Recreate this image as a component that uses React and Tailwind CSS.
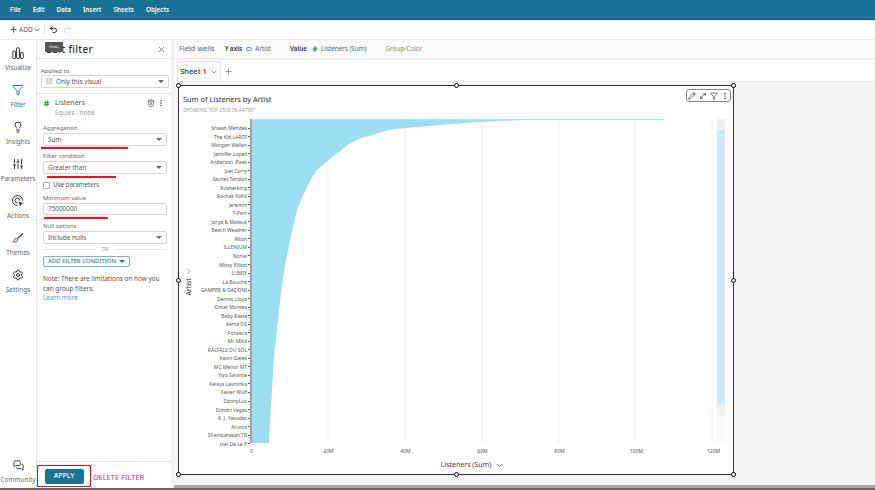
import React from "react";
import { Plus, ChevronDown, ChevronRight, Undo2, Redo2, X, Filter, Lightbulb, SlidersVertical, Settings, MessagesSquare, Trash2, MoreVertical, Hash, Pencil, MoveDiagonal, LayoutGrid } from "lucide-react";

const artists = ["Shawn Mendes","The Kid LAROI","Morgan Wallen","Jennifer Lopez","Anderson .Paak","Joel Corry","Sachet Tandon","Rusherking","Rochak Kohli","Jeremih","T-Pain","Jorge & Mateus","Beach Weather","Riton","ILLENIUM","Noriel","Missy Elliott","LUMIX","La Bouche","GAMPER & DADONI","Dennis Lloyd","Omar Montes","Baby Rasta","Kenia OS","Fonseca","Mc Mika","RÅLFÅLS DU SÖL","Kevin Gates","MC Menor MT","Yiyo Sarante","Kelsya Levronka","Xavier Wulf","DannyLux","Dimitri Vegas","K. J. Yesudas","Aruma","Silambarasan TR","Joel De La P"];

function Caret() {
  return <span className="w-0 h-0 border-l-[3px] border-r-[3px] border-t-[3px] border-l-transparent border-r-transparent border-t-[#666]" />;
}

function Select({ children, icon, className = "" }) {
  return (
    <div className={`h-[13px] border border-[#d5d5d5] rounded-[2px] flex items-center justify-between px-[4px] text-[6.4px] text-[#555] ${className}`}>
      <span className="flex items-center gap-[3px]">{icon}{children}</span>
      <Caret />
    </div>
  );
}

function Label({ children, className = "" }) {
  return <div className={`text-[5.9px] leading-[9px] text-[#666] ${className}`}>{children}</div>;
}

function Red({ className }) {
  return <div className={`absolute h-[1.5px] bg-[#f0101a] z-10 ${className}`} />;
}

function Nav({ icon, label, active }) {
  return (
    <div className="h-[37px] shrink-0 flex flex-col items-center justify-start gap-[1px] text-[#333]">
      <div className={`h-[18px] flex items-center justify-center ${active ? "text-[#1b7397]" : ""}`}>{icon}</div>
      <span className={`text-[6.4px] leading-[9px] whitespace-nowrap ${active ? "text-[#1b7397]" : "text-[#666]"}`}>{label}</span>
    </div>
  );
}

function Handle({ className }) {
  return <span className={`absolute w-[5px] h-[5px] rounded-full bg-white border border-black ${className}`} />;
}

function VisualizeIcon() {
  return (
    <svg width="12" height="12" viewBox="0 0 12 12" fill="none" stroke="#333" strokeWidth="1">
      <rect x="0.8" y="4" width="2.8" height="7.5" rx="0.6" />
      <rect x="4.6" y="0.8" width="2.8" height="10.7" rx="0.6" />
      <rect x="8.4" y="5.5" width="2.8" height="6" rx="0.6" />
    </svg>
  );
}

function ActionsIcon() {
  return (
    <svg width="12" height="12" viewBox="0 0 12 12" fill="none" stroke="#333" strokeWidth="1">
      <path d="M5.5 10.5a5 5 0 1 1 5-5" />
      <path d="M5.5 8a2.5 2.5 0 1 1 2.5-2.5" />
      <path d="M6.5 6.5 L11.5 8.3 L9.3 9.3 L8.3 11.5 Z" fill="#333" stroke="none" />
    </svg>
  );
}

function ThemesIcon() {
  return (
    <svg width="12" height="12" viewBox="0 0 12 12" fill="none" stroke="#333">
      <path d="M5.5 6.5 L11 1.5" strokeWidth="1.1" />
      <path d="M3.6 6.6 C5 6 6 7.2 5.4 8.6 C4.8 10 2.6 10.4 1 10 C2.2 9.4 2.2 7.4 3.6 6.6 Z" strokeWidth="0.9" />
    </svg>
  );
}

function Chart() {
  const w = 462, h = 324;
  const pts = [[0,0],[295,0],[261,1.5],[228,3],[188,6],[155,9],[138,11],[121,16],[108,20],[98,25],[88,33],[80,39],[72,46],[66,51],[60,60],[56,68],[50,81],[46,91],[42,108],[38,126],[35,141],[32,160],[30,174],[26,210],[23,238],[20,288],[18,324],[0,324]];
  const ticks = [77, 154, 231, 308, 384, 461];
  return (
    <svg width={w} height={h} viewBox={`0 0 ${w} ${h}`} className="block overflow-visible shrink-0">
      {ticks.map((t) => <line key={t} x1={t} x2={t} y1="0" y2={h} stroke="#f0f0f0" strokeWidth="1.2" />)}
      <polygon points={pts.map((p) => p.join(",")).join(" ")} fill="#9bddf1" />
      <line x1="0" x2="413" y1="0.5" y2="0.5" stroke="#b5e6f5" strokeWidth="1" />
      <line x1="0" x2="0" y1="0" y2={h} stroke="#888" strokeWidth="1.5" />
    </svg>
  );
}

export default function App() {
  return (
    <div className="w-[875px] h-[490px] overflow-hidden flex flex-col bg-white font-['Noto_Sans',sans-serif] relative">
      <div className="h-[20px] shrink-0 bg-[#1a7297] border-b border-[#135a78] flex items-center gap-[12px] pl-[10px] text-[6.3px] font-semibold text-white">
        <span>File</span><span>Edit</span><span>Data</span><span>Insert</span><span>Sheets</span><span>Objects</span>
      </div>

      <div className="h-[20px] shrink-0 bg-white border-b border-[#e6e6e6] flex items-center pl-[9px] text-[#444]">
        <Plus size={9} strokeWidth={2.4} />
        <span className="text-[6.5px] ml-[1px] text-[#555]">ADD</span>
        <ChevronDown size={8} className="ml-0" />
        <span className="w-px h-[14px] bg-[#e5e5e5] ml-[3px]" />
        <Undo2 size={9} strokeWidth={2.6} className="ml-[4px] text-[#222]" />
        <Redo2 size={9} className="ml-[5px] text-[#c8c8c8]" />
      </div>

      <div className="flex-1 min-h-0 flex border-b-[2px] border-[#666]">
        <aside className="w-[37px] shrink-0 border-r border-[#e6e6e6] flex flex-col pt-[4px]">
          <Nav icon={<VisualizeIcon />} label="Visualize" />
          <Nav active icon={<Filter size={12} />} label="Filter" />
          <Nav icon={<Lightbulb size={12} />} label="Insights" />
          <Nav icon={<SlidersVertical size={12} />} label="Parameters" />
          <Nav icon={<ActionsIcon />} label="Actions" />
          <Nav icon={<ThemesIcon />} label="Themes" />
          <Nav icon={<Settings size={12} />} label="Settings" />
          <div className="mt-auto h-[28px] mb-[4px]"><Nav icon={<MessagesSquare size={11} />} label="Community" /></div>
        </aside>

        <section className="w-[137px] shrink-0 border-r-[3px] border-[#f0f0f0] flex flex-col relative">
          <div className="h-[19px] shrink-0 border-b border-[#e8e8e8] flex items-center justify-between pl-[9px] pr-[5px]">
            <span className="text-[10px] tracking-[0.3px] font-medium text-[#333]">Edit filter</span>
            <X size={9} className="text-[#666]" />
          </div>
          <div className="absolute left-[8px] top-[2px] w-[18px] h-[10px] bg-[#555] rounded-[1px] text-white text-[3.5px] flex items-center justify-center">Undo</div>

          <div className="h-[35px] shrink-0 pl-[4px] pr-[2px] pt-[8px] border-b border-[#e8e8e8]">
            <Label className="h-[8px] leading-[8px]">Applied to</Label>
            <Select icon={<LayoutGrid size={7} className="text-[#aaa]" />}>Only this visual</Select>
          </div>

          <div className="pl-[6px] pr-[4px] pt-[4px] flex flex-col flex-1 min-h-0 relative">
            <div className="flex items-start">
              <Hash size={7} strokeWidth={3} className="text-[#2e8b2e] mt-[1.5px] mr-[5px]" />
              <div className="flex-1">
                <div className="text-[7px] leading-[10px] text-[#555]">Listeners</div>
                <div className="text-[6.3px] leading-[10px] text-[#999]">Equals - none</div>
              </div>
              <Trash2 size={8} className="text-[#555] mt-[1px]" />
              <MoreVertical size={8} className="text-[#444] mt-[1px] ml-[2px] mr-[2px]" />
            </div>

            <Label className="mt-[6px]">Aggregation</Label>
            <Select>Sum</Select>
            <Red className="left-[4px] top-[53px] w-[87px]" />

            <Label className="mt-[6px]">Filter condition</Label>
            <Select>Greater than</Select>
            <Red className="left-[10px] top-[82px] w-[69px]" />

            <div className="flex items-center gap-[3px] mt-[7px] text-[6.2px] leading-[8px] text-[#555]">
              <span className="w-[7px] h-[7px] border border-[#aaa] rounded-[1px]" />Use parameters
            </div>

            <Label className="mt-[5px]">Minimum value</Label>
            <div className="h-[12px] border border-[#d5d5d5] rounded-[2px] flex items-center px-[4px] text-[6.4px] text-[#555]">75000000</div>
            <Red className="left-[7px] top-[123px] w-[64px]" />

            <Label className="mt-[7px]">Null options</Label>
            <Select className="mt-0">Include nulls</Select>

            <div className="flex items-center gap-[6px] my-[2px] text-[5px] text-[#999] leading-[7px]">
              <span className="flex-1 h-px bg-[#e6e6e6]" />OR<span className="flex-1 h-px bg-[#e6e6e6]" />
            </div>

            <div className="h-[11px] w-[87px] mt-[1px] border border-[#7fb1c8] rounded-[2px] bg-[#f7fbfd] flex items-center justify-center gap-[3px] text-[6px] text-[#1b7397]">
              ADD FILTER CONDITION
              <span className="w-0 h-0 border-l-[3px] border-r-[3px] border-t-[3px] border-l-transparent border-r-transparent border-t-[#1b7397]" />
            </div>

            <p className="mt-[7px] text-[6.4px] leading-[9.5px] text-[#555]">Note: There are limitations on how you can group filters.</p>
            <span className="text-[6.4px] leading-[10px] text-[#3f9fd0]">Learn more</span>
          </div>

          <div className="h-[27px] shrink-0 border-t border-[#e8e8e8] flex items-end pb-[1px] relative">
            <div className="w-[54px] h-[22px] border-[1.5px] border-[#d8141c] flex items-center justify-center">
              <span className="w-[39px] h-[15px] rounded-[2px] bg-[#1a7297] text-white text-[7px] font-medium flex items-center justify-center">APPLY</span>
            </div>
            <span className="ml-[2px] mb-[5px] text-[7.5px] leading-[10px] text-[#c6356c]">DELETE FILTER</span>
          </div>
        </section>

        <main className="flex-1 min-w-0 flex flex-col bg-[#f4f4f4]">
          <div className="h-[20px] shrink-0 bg-[#fafafa] border-b-[2px] border-[#eeeeee] flex items-center pl-[5px] text-[6.3px] text-[#666]">
            <span className="text-[7.4px] text-[#666]">Field wells</span>
            <span className="ml-[10px] font-semibold text-[#333]">Y axis</span>
            <span className="ml-[4px] w-[6px] h-[4px] border border-[#3f9fd0] rounded-[2px]" />
            <span className="ml-[3px]">Artist</span>
            <span className="ml-[19px] font-semibold text-[#333]">Value</span>
            <Hash size={6} strokeWidth={3} className="ml-[5px] text-[#2e8b2e]" />
            <span className="ml-[3px]">Listeners (Sum)</span>
            <span className="ml-[19px] text-[#888]">Group/Color</span>
          </div>

          <div className="h-[22px] shrink-0 bg-white border-b-[1.5px] border-[#ececec] flex items-end pl-[3px]">
            <div className="h-[20px] w-[44px] bg-[#fafafa] border border-b-0 border-[#e6e6e6] flex items-center justify-center gap-[3px] text-[7.5px] font-medium text-[#333]">
              Sheet 1 <ChevronDown size={8} className="text-[#666]" />
            </div>
            <Plus size={9} className="ml-[3px] mb-[5px] text-[#777]" />
          </div>

          <div className="flex-1 min-h-0 pl-[4px] pt-[3px]">
            <div className="relative w-[556px] h-[390px] bg-white border-[1.5px] border-[#333]">
              <Handle className="-left-[3px] -top-[3px]" />
              <Handle className="left-[275px] -top-[3px]" />
              <Handle className="-right-[3px] -top-[3px]" />
              <Handle className="-left-[3px] top-[192px]" />
              <Handle className="-right-[3px] top-[192px]" />
              <Handle className="-left-[3px] -bottom-[3px]" />
              <Handle className="left-[275px] -bottom-[3px]" />
              <Handle className="-right-[3px] -bottom-[3px]" />

              <div className="absolute right-[2px] top-[3px] w-[45px] h-[13px] bg-white border border-[#888] rounded-[3px] flex items-center justify-center gap-[3px] text-[#333]">
                <Pencil size={8} /><MoveDiagonal size={8} /><Filter size={8} /><MoreVertical size={8} />
              </div>

              <div className="pl-[4px] pt-[7px]">
                <div className="text-[7.4px] leading-[12px] text-[#333]">Sum of Listeners by Artist</div>
                <div className="text-[5px] leading-[8px] mt-[1px] text-[#999]">SHOWING TOP 2500 IN ARTIST</div>
              </div>

              <div className="flex mt-[5px]">
                <div className="w-[11px] ml-[4px] flex flex-col items-center pt-[147px]">
                  <ChevronRight size={11} strokeWidth={1.2} className="text-[#555]" />
                  <span className="mt-[1px] [writing-mode:vertical-rl] rotate-180 text-[7px] leading-[10px] text-[#333]">Artist</span>
                </div>
                <div className="w-[57px] shrink-0 h-[324px] mt-[5px] flex flex-col justify-between pr-[1px] -mb-[5px]">
                  {artists.map((a) => (
                    <div key={a} className="h-[8px] flex items-center justify-end text-[5px] leading-[8px] text-[#555] whitespace-nowrap">
                      {a}<span className="w-[2px] h-px bg-[#555] ml-[1px]" />
                    </div>
                  ))}
                </div>
                <Chart />
                <div className="w-[8px] h-[324px] ml-[4px] bg-[#fafafa] flex flex-col">
                  <div className="h-[11px] bg-[#f0f0f0]" />
                  <div className="h-[274px] bg-[#d0e9f7]" />
                  <div className="h-[11px] bg-[#f0f0f0]" />
                </div>
              </div>

              <div className="flex ml-[34px] mt-[4px] text-[5px] leading-[8px] text-[#555]">
                {["0","20M","40M","60M","80M","100M","120M"].map((t) => (
                  <span key={t} className="w-[77px] shrink-0 text-center">{t}</span>
                ))}
              </div>

              <div className="flex justify-center items-center gap-[4px] mt-[5px] ml-[33px] text-[7px] leading-[10px] text-[#444]">
                Listeners (Sum)<ChevronDown size={9} className="text-[#555]" />
              </div>
            </div>
          </div>
          <div className="h-[3px] shrink-0 bg-[#a8a8a8]" />
        </main>
      </div>
    </div>
  );
}
